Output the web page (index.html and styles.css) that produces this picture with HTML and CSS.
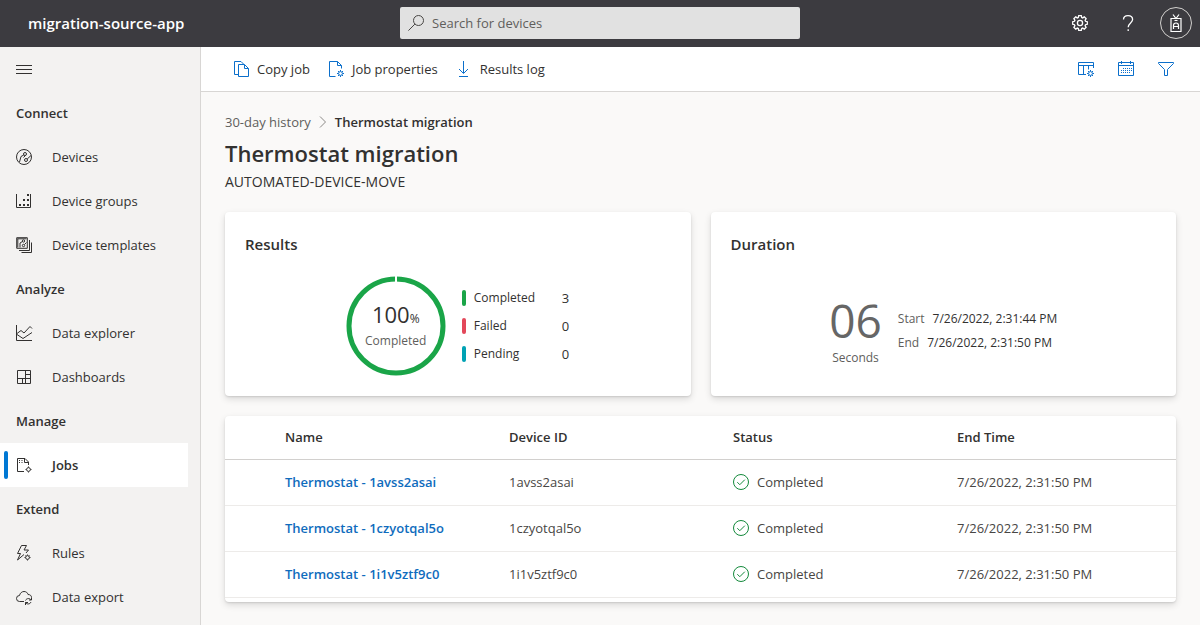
FILE: index.html
```html
<!DOCTYPE html>
<html lang="en">
<head>
<meta charset="utf-8">
<title>Thermostat migration</title>
<link rel="stylesheet" href="styles.css">
</head>
<body>
<svg class="defs" aria-hidden="true">
  <symbol id="gear" viewBox="0 0 16 16"><path d="M6.700 .7h2.600l.4 1.800 1 .4 1.600-1 1.800 1.800-1 1.600.4 1 1.800.4v2.600l-1.800.4-.4 1 1 1.600-1.800 1.800-1.600-1-1 .4-.4 1.800H6.700l-.4-1.800-1-.4-1.600 1-1.800-1.800 1-1.600-.4-1L.7 9.300V6.700l1.800-.4.4-1-1-1.600 1.800-1.800 1.600 1 1-.4z"/><circle cx="8" cy="8" r="2.600"/></symbol>
  <symbol id="minigear" viewBox="0 0 7 7"><circle cx="3.500" cy="3.500" r="1.900"/><path d="M3.500 0v1.400M3.500 5.600V7M0 3.500h1.400M5.600 3.500H7M1 1l1 1M5 5l1 1M6 1L5 2M2 5L1 6"/></symbol>
  <symbol id="done" viewBox="0 0 16 16"><circle cx="8" cy="8" r="7.500"/><path d="M4.300 8.200l2.500 2.500 5-5"/></symbol>
</svg>

<header class="topbar">
  <div class="app-name">migration-source-app</div>
  <label class="search">
    <svg class="icon" viewBox="0 0 16 16" aria-hidden="true"><circle cx="10.500" cy="5.500" r="5"/><path d="M6.900 9.100L.4 15.600"/></svg>
    <input type="search" placeholder="Search for devices" aria-label="Search for devices">
  </label>
  <div class="top-actions">
    <button type="button" aria-label="Settings"><svg class="icon strong" aria-hidden="true"><use href="#gear"/></svg></button>
    <button type="button" aria-label="Help"><svg class="icon strong" viewBox="0 0 16 16" aria-hidden="true"><path d="M3.500 4.600C3.500 2 5.400.6 8 .6s4.600 1.500 4.600 4c0 3.200-4.400 3.600-4.400 7.600M8.200 14.300v1.700"/></svg></button>
    <button type="button" class="account" aria-label="Account"><svg class="badge" viewBox="0 0 12 18" aria-hidden="true"><path d="M1 4.500h10v13H1zM3 .5l3 4 3-4M4.500 6.500h3"/><path d="M3.500 15v-3.500a2.500 2.500 0 0 1 5 0V15M3.500 12.500h5"/></svg></button>
  </div>
</header>

<div class="shell">
  <nav class="sidebar" aria-label="Main">
    <button type="button" class="menu" aria-label="Toggle navigation"><svg class="icon" viewBox="0 0 16 16" aria-hidden="true"><path d="M0 4.500h16M0 8.500h16M0 12.500h16"/></svg></button>
    <h2>Connect</h2>
    <a href="#devices"><svg class="icon" viewBox="0 0 16 16" aria-hidden="true"><circle cx="8" cy="8" r="7.500"/><circle cx="9" cy="5" r="1.500"/><circle cx="10" cy="11" r="1.500"/><path d="M7.800 6L5 7.500 3.500 13M9.500 6.500L7.500 8.500M11.200 10L15 6.500"/></svg>Devices</a>
    <a href="#groups"><svg class="icon" viewBox="0 0 16 16" aria-hidden="true"><path d="M.5 1v13.500h14V1"/><path class="dots" d="M3 11h2v2H3zM7 11h2v2H7zM11 11h2v2h-2zM7 6h2v2H7zM11 6h2v2h-2zM11 1h2v2h-2z"/></svg>Device groups</a>
    <a href="#templates"><svg class="icon" viewBox="0 0 16 16" aria-hidden="true"><path d="M.7.700h10.600v10.600H.7z"/><path d="M1.500 1.800h9M1.800 1.500v9"/><circle cx="7.500" cy="4" r="1.200"/><circle cx="7.500" cy="8.500" r="1.200"/><path d="M6.500 4.500L4 6v4.500M8.500 7.500l2-2M13.500 3v10.500H3M15.500 5.500v10H5.500"/></svg>Device templates</a>
    <h2>Analyze</h2>
    <a href="#explorer"><svg class="icon" viewBox="0 0 16 16" aria-hidden="true"><path d="M.5 0v15.500H16M1 8.500l4-3 3 2.500 6-6.500 2 2M1 9.500l6 4 9-6"/></svg>Data explorer</a>
    <a href="#dashboards"><svg class="icon" viewBox="0 0 16 16" aria-hidden="true"><path d="M1.500 1.500h13v13h-13zM9.500 1.500v13M1.500 9.500h13M9.500 5.500h5M6.500 9.500v5"/></svg>Dashboards</a>
    <h2>Manage</h2>
    <a href="#jobs" class="current" aria-current="page"><svg class="icon" viewBox="0 0 16 16" aria-hidden="true"><path d="M8 14.500H1.500v-13H9l3.500 3.500v3M8.500 1.500v4h4M3 3.500h1M5.500 3.500h1M3 5.500h1M5.500 5.500h1"/><circle cx="12.500" cy="12.500" r="1.900"/><path d="M12.500 9.500v1M12.500 14.500v1M9.500 12.500h1M14.500 12.500h1"/></svg>Jobs</a>
    <h2>Extend</h2>
    <a href="#rules"><svg class="icon" viewBox="0 0 16 16" aria-hidden="true"><path d="M5.500.5h5L8 5h4.500L10 8M5.500.5l-4 8h3l-3 6.500L8 9.500"/><circle cx="11.500" cy="12.500" r="1.900"/><path d="M11.500 9.500v1M11.500 14.500v1M8.500 12.500h1M13.500 12.500h1M9.500 10.500l.7.700M13.500 10.500l-.7.700"/></svg>Rules</a>
    <a href="#export"><svg class="icon" viewBox="0 0 16 16" aria-hidden="true"><path d="M8 12.500H3.500a3 3 0 0 1 0-6C4 4 6 2.500 8 2.500s3.500 1 4 3c2 0 3.500 1 3.500 3"/><path d="M9.500 11.500c1-2.500 4.500-2.500 5.500-.5M15.500 8.500V11H13M15 13c-1 2.500-4.500 2.500-5.500.5M9.500 16v-2.500H12"/></svg>Data export</a>
  </nav>

  <div class="content">
    <div class="commands">
      <div class="command-group">
        <button type="button"><svg class="icon" viewBox="0 0 16 16" aria-hidden="true"><path d="M5.500 13.500h-4V.5H8L10.500 3M5.500 3.500h6l4 4v8h-10zM11.500 3.500v4h4"/></svg>Copy job</button>
        <button type="button"><svg class="icon" viewBox="0 0 16 16" aria-hidden="true"><path d="M7.500 15.500h-6V.5h8l4 4v3M9.500.5v4h4"/><use href="#minigear" x="9" y="9" width="7" height="7"/></svg>Job properties</button>
        <button type="button"><svg class="icon" viewBox="0 0 16 16" aria-hidden="true"><path d="M7.500 0v12M3 8l4.500 4.500L12 8M3 15.500h9"/></svg>Results log</button>
      </div>
      <div class="view-group">
        <button type="button" aria-label="Column options"><svg class="icon" viewBox="0 0 16 16" aria-hidden="true"><path d="M8 13.500H.5V1.500h15V7M.5 4.500h15M5.500 4.500v9M10.500 4.500v4"/><use href="#minigear" x="9" y="9" width="7" height="7"/></svg></button>
        <button type="button" aria-label="Date range"><svg class="icon" viewBox="0 0 16 16" aria-hidden="true"><path d="M.5 1.500h15v13H.5zM.5 4.500h15M3.500 0v3M12.500 0v3"/><path class="grid-dots" d="M5 7.500h9M3 9.500h11M3 11.500h9"/></svg></button>
        <button type="button" aria-label="Filter"><svg class="icon" viewBox="0 0 16 16" aria-hidden="true"><path d="M.5 1.500h15v1L9.500 8.500v6h-3v-6L.5 2.500z"/></svg></button>
      </div>
    </div>

    <main>
      <nav class="breadcrumb" aria-label="Breadcrumb">
        <a href="#history">30-day history</a>
        <svg class="chevron" viewBox="0 0 8 12" aria-hidden="true"><path d="M1 .5L6.500 6 1 11.500"/></svg>
        <span>Thermostat migration</span>
      </nav>
      <h1>Thermostat migration</h1>
      <p class="subtitle">AUTOMATED-DEVICE-MOVE</p>

      <div class="cards">
        <section class="card">
          <h3>Results</h3>
          <div class="card-body">
            <div class="ring">
              <svg viewBox="0 0 100 100" aria-hidden="true"><circle cx="50" cy="50" r="47"/><path d="M50 0v7"/></svg>
              <div class="ring-label">
                <div class="percent">100<small>%</small></div>
                <div>Completed</div>
              </div>
            </div>
            <dl class="legend">
              <div class="completed"><dt>Completed</dt><dd>3</dd></div>
              <div class="failed"><dt>Failed</dt><dd>0</dd></div>
              <div class="pending"><dt>Pending</dt><dd>0</dd></div>
            </dl>
          </div>
        </section>
        <section class="card">
          <h3>Duration</h3>
          <div class="card-body">
            <div class="elapsed"><strong>06</strong><span>Seconds</span></div>
            <dl class="times">
              <div><dt>Start</dt><dd>7/26/2022, 2:31:44 PM</dd></div>
              <div><dt>End</dt><dd>7/26/2022, 2:31:50 PM</dd></div>
            </dl>
          </div>
        </section>
      </div>

      <div class="table-card">
        <table>
          <thead><tr><th scope="col">Name</th><th scope="col">Device ID</th><th scope="col">Status</th><th scope="col">End Time</th></tr></thead>
          <tbody>
            <tr><td><a href="#d1">Thermostat - 1avss2asai</a></td><td>1avss2asai</td><td><span class="status"><svg class="icon" aria-hidden="true"><use href="#done"/></svg>Completed</span></td><td>7/26/2022, 2:31:50 PM</td></tr>
            <tr><td><a href="#d2">Thermostat - 1czyotqal5o</a></td><td>1czyotqal5o</td><td><span class="status"><svg class="icon" aria-hidden="true"><use href="#done"/></svg>Completed</span></td><td>7/26/2022, 2:31:50 PM</td></tr>
            <tr><td><a href="#d3">Thermostat - 1i1v5ztf9c0</a></td><td>1i1v5ztf9c0</td><td><span class="status"><svg class="icon" aria-hidden="true"><use href="#done"/></svg>Completed</span></td><td>7/26/2022, 2:31:50 PM</td></tr>
          </tbody>
        </table>
      </div>
    </main>
  </div>
</div>
</body>
</html>
```
FILE: styles.css
```css
* { box-sizing: border-box; }

body {
  margin: 0;
  min-height: 100vh;
  display: flex;
  flex-direction: column;
  background: #faf9f8;
  color: #323130;
  font: 13px/20px "Open Sans", "Noto Sans", sans-serif;
}

h1, h2, h3, p, dl, dd { margin: 0; }
a { color: inherit; text-decoration: none; }
button { padding: 0; border: 0; background: none; color: inherit; font: inherit; }

.defs { position: absolute; width: 0; height: 0; }
.icon { flex: none; width: 16px; height: 16px; fill: none; stroke: currentColor; overflow: visible; }
.icon.strong { stroke-width: 1.3; }

/* Top bar */
.topbar {
  display: grid;
  grid-template-columns: 1fr 1fr 1fr;
  align-items: center;
  height: 47px;
  border-bottom: 1px solid #3c3b40;
  background: #3c3b40;
  color: #fff;
}
.app-name { padding-left: 28px; font-size: 15px; font-weight: 600; }
.search {
  display: flex;
  align-items: center;
  gap: 8px;
  height: 32px;
  padding: 0 8px;
  border-radius: 2px;
  background: #e1e1e1;
  color: #484644;
}
.search input { flex: 1; min-width: 0; padding: 0; border: 0; outline: 0; background: none; color: #323130; font: inherit; }
.search input::placeholder { color: #605e5c; opacity: 1; }
.top-actions { display: flex; justify-content: flex-end; align-items: center; gap: 16px; padding-right: 8px; }
.top-actions button { display: flex; align-items: center; justify-content: center; width: 32px; height: 32px; }
.top-actions .account { border: 1px solid #d2d0ce; border-radius: 50%; }
.badge { width: 12px; height: 18px; fill: none; stroke: #fff; stroke-width: 1.2; }

/* Layout */
.shell { flex: 1; display: flex; }
.content { flex: 1; min-width: 0; }

/* Side navigation */
.sidebar { flex: none; width: 201px; padding-right: 12px; border-right: 1px solid #d8d6d4; background: #f3f2f1; }
.sidebar h2 { padding: 0 16px; font-size: 13px; line-height: 44px; font-weight: 600; }
.sidebar a, .menu { display: flex; align-items: center; gap: 20px; height: 44px; padding: 0 16px; }
.sidebar .current {
  position: relative;
  background: #fff;
  font-weight: 600;
}
.sidebar .current::before {
  content: "";
  position: absolute;
  left: 4px;
  top: 8px;
  bottom: 8px;
  width: 4px;
  border-radius: 2px;
  background: #0078d4;
}
.dots { fill: currentColor; stroke: none; }

/* Command bar */
.commands {
  display: flex;
  justify-content: space-between;
  align-items: center;
  height: 45px;
  padding: 0 26px 0 32px;
  border-bottom: 1px solid #d8d6d4;
  background: #fff;
}
.command-group { display: flex; gap: 18px; }
.view-group { display: flex; gap: 24px; }
.commands button { display: flex; align-items: center; gap: 8px; }
.commands .icon { stroke: #0b6fcb; }
.grid-dots { stroke-dasharray: 1 1; }

/* Page heading */
main { padding: 20px 24px 24px; }
.breadcrumb { display: flex; align-items: center; gap: 8px; color: #605e5c; }
.breadcrumb span { color: #323130; font-weight: 600; }
.chevron { width: 8px; height: 12px; fill: none; stroke: #8a8886; }
h1 { padding-top: 2px; font-size: 22px; line-height: 38px; font-weight: 600; }
.subtitle { font-size: 14px; }

/* Summary cards */
.cards { display: grid; grid-template-columns: 1fr 1fr; gap: 20px; margin: 20px 0; }
.card, .table-card {
  border-radius: 4px;
  background: #fff;
  box-shadow: 0 3px 7px rgba(0, 0, 0, .13), 0 1px 2px rgba(0, 0, 0, .11);
}
.card { padding: 20px; }
.card h3 { font-size: 15px; line-height: 24px; font-weight: 600; }
.card-body { display: flex; justify-content: center; align-items: center; gap: 16px; min-height: 100px; margin-top: 20px; font-size: 12px; }

.ring { display: grid; width: 100px; height: 100px; }
.ring > * { grid-area: 1 / 1; }
.ring svg { fill: none; stroke: #1aa548; stroke-width: 5; }
.ring path { stroke: #fff; stroke-width: 2; }
.ring-label { align-self: center; padding-bottom: 4px; text-align: center; line-height: 16px; color: #605e5c; }
.percent { color: #323130; font-size: 22px; line-height: 28px; }
.percent small { font-size: 12px; }

.legend { display: grid; gap: 12px; }
.legend div { display: grid; grid-template-columns: 4px 80px 8px; gap: 8px; line-height: 16px; }
.legend div::before { content: ""; border-radius: 2px; background: currentColor; }
.legend dt, .legend dd { color: #323130; }
.legend dd { font-size: 13px; font-weight: 500; }
.completed { color: #1aa548; }
.failed { color: #e3485a; }
.pending { color: #00a2b4; }

.elapsed { display: grid; justify-items: center; padding-top: 4px; color: #605e5c; line-height: 16px; }
.elapsed strong { color: #666; font-size: 46px; line-height: 60px; font-weight: 400; }
.times { padding-top: 10px; font-weight: 500; }
.times div { display: flex; gap: 8px; line-height: 24px; }
.times dt { color: #605e5c; }

/* Job table */
.table-card { padding-bottom: 4px; overflow: hidden; }
table { width: 100%; border-collapse: separate; border-spacing: 0; table-layout: fixed; }
th, td { width: 224px; height: 46px; padding: 0 0 2px; border-bottom: 1px solid #edebe9; text-align: left; font-weight: 400; }
th { height: 44px; border-color: #d2d0ce; font-weight: 600; }
th:first-child, td:first-child { width: 284px; padding-left: 60px; }
th:last-child, td:last-child { width: auto; }
td { color: #484644; }
td a { color: #0f6cbd; font-weight: 600; }
.status { display: flex; align-items: center; gap: 8px; }
.status .icon { stroke: #13893b; }
```
